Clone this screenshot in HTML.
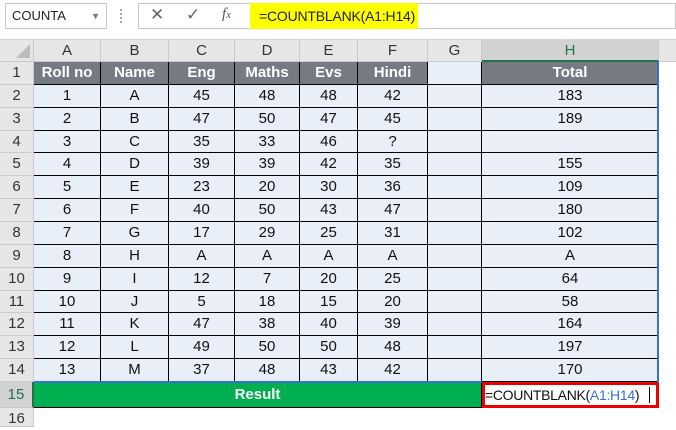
<!DOCTYPE html><html><head><style>
*{margin:0;padding:0;box-sizing:border-box}
body{width:676px;height:427px;overflow:hidden;background:#fff;font-family:"Liberation Sans",Arial,sans-serif;position:relative}
.tb{position:absolute;left:0;top:0;width:676px;height:40px;background:#fff;border-bottom:1px solid #d4d4d4}
.nb{position:absolute;left:5px;top:3px;width:102px;height:26px;border:1px solid #c6c6c6;font-size:13px;line-height:24px;padding-left:6px;color:#222}
.fb{position:absolute;left:138px;top:3px;width:538px;height:26px;border:1px solid #c6c6c6}
.yl{position:absolute;left:250px;top:3px;width:168px;height:26px;background:#ffff00;font-size:14px;line-height:26px;padding-left:9px;color:#222;white-space:nowrap;letter-spacing:-0.2px}
.ch{position:absolute;top:40px;height:22px;background:#e6e6e6;border-right:1px solid #cacaca;border-bottom:1px solid #cacaca;text-align:center;font-size:15px;line-height:22px;color:#333}
.g{position:absolute;left:34px;top:62px;display:grid;grid-template-columns:67px 68px 66px 65px 58px 70px 54px 177px;grid-template-rows:repeat(14,22.86px) 26px}
.g div{border-right:1px solid #000;border-bottom:1px solid #000;background:#e9eff8;text-align:center;font-size:15px;line-height:22px;color:#111;white-space:nowrap}
.g .h{background:#767b83;color:#fff;font-weight:bold}
.rh{position:absolute;left:0;top:62px;width:34px;display:grid;grid-template-rows:repeat(14,22.86px) 26px 19px}
.rh div{background:#e6e6e6;border-bottom:1px solid #cacaca;border-right:1px solid #cacaca;text-align:center;font-size:15px;line-height:22px;color:#333}
</style></head><body>
<div class="tb">
<div class="nb">COUNTA<span style="position:absolute;right:6px;top:0;font-size:9px;color:#777">▼</span></div>
<div style="position:absolute;left:120px;top:9px;width:2px;height:14px;border-left:2px dotted #aaa"></div>
<div class="fb"></div>
<div style="position:absolute;left:150px;top:5px;font-size:17px;color:#666">✕</div>
<div style="position:absolute;left:186px;top:5px;font-size:17px;color:#666">✓</div>
<div style="position:absolute;left:222px;top:6px;font-size:15px;color:#555;font-style:italic;font-family:'Liberation Serif',serif">f<span style="font-size:11px">x</span></div>
<div class="yl">=COUNTBLANK(A1:H14)</div>
</div>
<div class="ch" style="left:0;width:34px;background:#e6e6e6"><div style="position:absolute;right:3px;bottom:3px;width:0;height:0;border-left:14px solid transparent;border-bottom:14px solid #bdbdbd"></div></div>
<div class="ch" style="left:34px;width:67px">A</div>
<div class="ch" style="left:101px;width:68px">B</div>
<div class="ch" style="left:169px;width:66px">C</div>
<div class="ch" style="left:235px;width:65px">D</div>
<div class="ch" style="left:300px;width:58px">E</div>
<div class="ch" style="left:358px;width:70px">F</div>
<div class="ch" style="left:428px;width:54px">G</div>
<div class="ch" style="left:482px;width:177px;background:#d2d2d2;border-bottom:2px solid #217346;color:#217346">H</div>
<div class="ch" style="left:659px;width:17px;border-right:0"></div>
<div class="rh"><div>1</div><div>2</div><div>3</div><div>4</div><div>5</div><div>6</div><div>7</div><div>8</div><div>9</div><div>10</div><div>11</div><div>12</div><div>13</div><div>14</div><div style="background:#d2d2d2;line-height:26px;color:#217346;border-right:2px solid #217346">15</div><div>16</div></div>
<div class="g">
<div class="h">Roll no</div><div class="h">Name</div><div class="h">Eng</div><div class="h">Maths</div><div class="h">Evs</div><div class="h">Hindi</div><div></div><div class="h">Total</div>
<div>1</div><div>A</div><div>45</div><div>48</div><div>48</div><div>42</div><div></div><div>183</div>
<div>2</div><div>B</div><div>47</div><div>50</div><div>47</div><div>45</div><div></div><div>189</div>
<div>3</div><div>C</div><div>35</div><div>33</div><div>46</div><div>?</div><div></div><div></div>
<div>4</div><div>D</div><div>39</div><div>39</div><div>42</div><div>35</div><div></div><div>155</div>
<div>5</div><div>E</div><div>23</div><div>20</div><div>30</div><div>36</div><div></div><div>109</div>
<div>6</div><div>F</div><div>40</div><div>50</div><div>43</div><div>47</div><div></div><div>180</div>
<div>7</div><div>G</div><div>17</div><div>29</div><div>25</div><div>31</div><div></div><div>102</div>
<div>8</div><div>H</div><div>A</div><div>A</div><div>A</div><div>A</div><div></div><div>A</div>
<div>9</div><div>I</div><div>12</div><div>7</div><div>20</div><div>25</div><div></div><div>64</div>
<div>10</div><div>J</div><div>5</div><div>18</div><div>15</div><div>20</div><div></div><div>58</div>
<div>11</div><div>K</div><div>47</div><div>38</div><div>40</div><div>39</div><div></div><div>164</div>
<div>12</div><div>L</div><div>49</div><div>50</div><div>50</div><div>48</div><div></div><div>197</div>
<div>13</div><div>M</div><div>37</div><div>48</div><div>43</div><div>42</div><div></div><div>170</div>
<div style="grid-column:1/8;background:#00b050;color:#fff;font-weight:bold;line-height:26px">Result</div>
<div style="background:#fff;border:3px solid #e00;text-align:left;line-height:20px;padding-left:0;font-size:14px;letter-spacing:-0.3px;color:#111;position:relative">=COUNTBLANK(<span style="color:#3a6fd6">A1:H14</span>)<span style="position:absolute;right:6px;top:2px;width:1px;height:16px;background:#000"></span></div>
</div>
<div style="position:absolute;left:657px;top:62px;width:2px;height:321px;background:#3a6fd6"></div>
<div style="position:absolute;left:34px;top:381px;width:448px;height:2px;background:#3a6fd6"></div>
</body></html>
